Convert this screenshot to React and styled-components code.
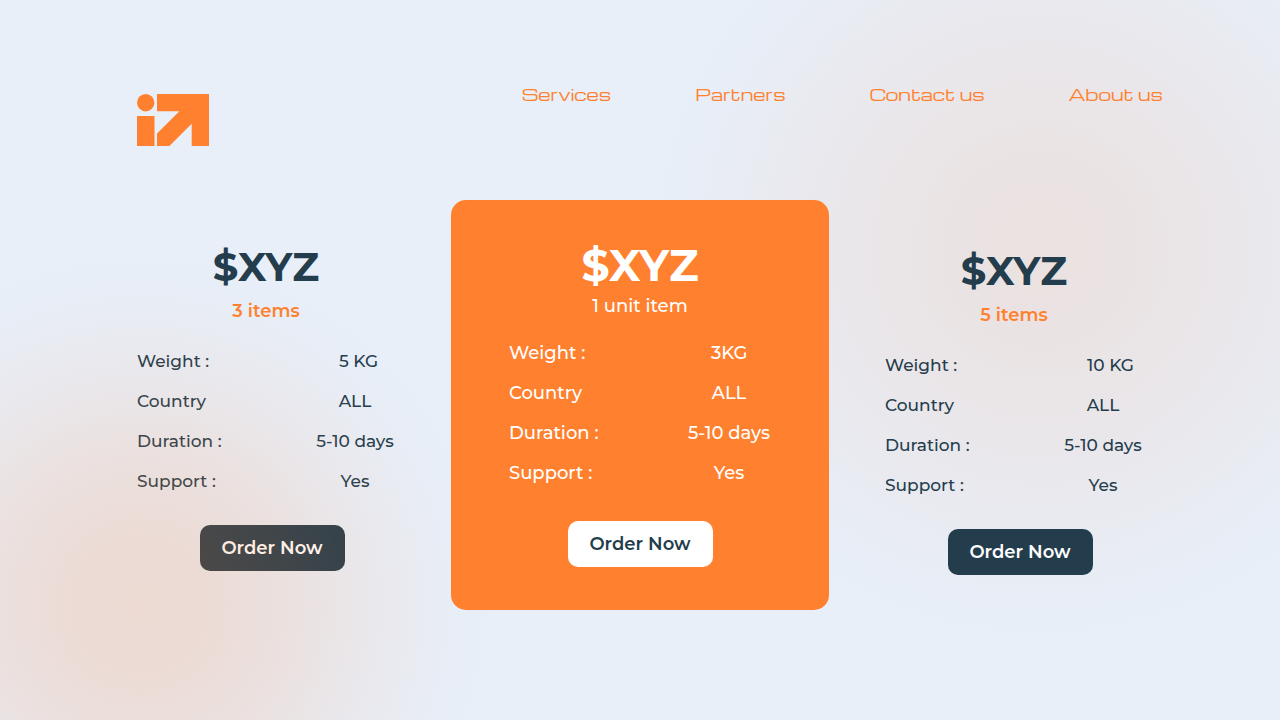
import React from "react";
import styled, { createGlobalStyle, ThemeProvider } from "styled-components";

const theme = {
  orange: "#ff812f",
  navy: "#243d4d",
  sky: "#e8eff9",
  white: "#ffffff",
};

const GlobalStyle = createGlobalStyle`
  *, *::before, *::after { box-sizing: border-box; }
  body {
    margin: 0;
    background: ${theme.sky};
    font-family: Montserrat, Inter, "Liberation Sans", sans-serif;
  }
`;

const Page = styled.div`
  position: relative;
  min-height: 100vh;
  overflow: hidden;
  color: ${(p) => p.theme.navy};
  background: radial-gradient(
      circle 400px at 1040px 250px,
      rgba(255, 128, 48, 0.12) 0%,
      rgba(255, 128, 48, 0.11) 20%,
      rgba(255, 128, 48, 0.08) 45%,
      rgba(255, 128, 48, 0.045) 68%,
      rgba(255, 128, 48, 0.012) 88%,
      rgba(255, 128, 48, 0) 100%
    )
    ${(p) => p.theme.sky};
`;

/* Warm light that falls over the lower left corner, tinting what is under it. */
const Glow = styled.div`
  position: absolute;
  inset: 0;
  pointer-events: none;
  background: radial-gradient(
    circle 360px at 140px 605px,
    rgba(255, 128, 48, 0.19) 0%,
    rgba(255, 128, 48, 0.175) 20%,
    rgba(255, 128, 48, 0.12) 45%,
    rgba(255, 128, 48, 0.055) 68%,
    rgba(255, 128, 48, 0.012) 88%,
    rgba(255, 128, 48, 0) 100%
  );
`;

const Header = styled.header`
  display: flex;
  justify-content: space-between;
  align-items: flex-start;
  padding: 80px 117px 0 137px;
`;

const LogoLink = styled.a`
  display: block;
  margin-top: 14px;
  color: ${(p) => p.theme.orange};

  svg { display: block; }
`;

const Nav = styled.nav`
  display: flex;
  gap: 84px;
`;

const NavLink = styled.a`
  color: ${(p) => p.theme.orange};
  font-family: Michroma, "DejaVu Sans", sans-serif;
  font-size: 16px;
  font-weight: 400;
  line-height: 28px;
  text-decoration: none;
  white-space: nowrap;
`;

const Plans = styled.main`
  display: grid;
  grid-template-columns: 258fr 378fr 258fr;
  column-gap: 56px;
  align-items: start;
  padding: 54px 137px 40px;
`;

const Plan = styled.section`
  display: flex;
  flex-direction: column;
  align-items: center;
  padding-top: ${(p) => (p.$lowered ? 47 : 43)}px;
`;

const FeaturedPlan = styled(Plan)`
  padding: 42px 58px 43px;
  border-radius: 15px;
  color: ${(p) => p.theme.white};
  background: ${(p) => p.theme.orange};
`;

const Price = styled.h2`
  margin: 0;
  font-size: ${(p) => (p.$featured ? 44 : 40)}px;
  font-weight: 700;
  line-height: ${(p) => (p.$featured ? 46 : 48)}px;
`;

const Quantity = styled.p`
  margin: ${(p) => (p.$featured ? "6px 0 15px" : "8px 0 18px")};
  color: ${(p) => (p.$featured ? p.theme.white : p.theme.orange)};
  font-size: 18px;
  font-weight: ${(p) => (p.$featured ? 500 : 600)};
  line-height: 24px;
`;

const Details = styled.table`
  width: 100%;
  border-collapse: collapse;
  font-size: ${(p) => (p.$featured ? 18 : 17)}px;
  font-weight: 500;
  line-height: 24px;
`;

const Label = styled.th`
  padding: 8px 0;
  font-weight: 500;
  text-align: left;
`;

const Value = styled.td`
  width: ${(p) => (p.$featured ? 84 : 80)}px;
  padding: 8px 0 8px ${(p) => (p.$indented ? 24 : 0)}px;
  text-align: ${(p) => (p.$indented ? "left" : "center")};
  white-space: nowrap;
`;

const OrderButton = styled.button`
  width: 145px;
  height: 46px;
  margin: ${(p) => (p.$featured ? "28px 0 0" : "24px 0 0 12px")};
  padding: 0;
  border: 0;
  border-radius: 10px;
  color: ${(p) => (p.$featured ? p.theme.navy : p.theme.white)};
  background: ${(p) => (p.$featured ? p.theme.white : p.theme.navy)};
  font-family: inherit;
  font-size: 18px;
  font-weight: 600;
  cursor: pointer;
`;

const links = ["Services", "Partners", "Contact us", "About us"];

const plans = [
  { quantity: "3 items", weight: "5 KG" },
  { quantity: "1 unit item", weight: "3KG", featured: true },
  { quantity: "5 items", weight: "10 KG", lowered: true },
];

function Logo() {
  return (
    <svg width="72" height="52" viewBox="0 0 72 52" fill="currentColor" aria-hidden="true">
      <circle cx="8.7" cy="8.7" r="8.7" />
      <path d="M0 22H17.5V52H0Z" />
      <path d="M20 0H72V52H54.7V29.7L32.4 52H20V39.6L42.4 17.3H20Z" />
    </svg>
  );
}

function PlanCard({ plan }) {
  const Card = plan.featured ? FeaturedPlan : Plan;
  const rows = [
    { label: "Weight :", value: plan.weight, indented: true },
    { label: "Country", value: "ALL" },
    { label: "Duration :", value: "5-10 days" },
    { label: "Support :", value: "Yes" },
  ];
  return (
    <Card $lowered={plan.lowered}>
      <Price $featured={plan.featured}>$XYZ</Price>
      <Quantity $featured={plan.featured}>{plan.quantity}</Quantity>
      <Details $featured={plan.featured}>
        <tbody>
          {rows.map(({ label, value, indented }) => (
            <tr key={label}>
              <Label scope="row">{label}</Label>
              <Value $featured={plan.featured} $indented={indented}>
                {value}
              </Value>
            </tr>
          ))}
        </tbody>
      </Details>
      <OrderButton type="button" $featured={plan.featured}>
        Order Now
      </OrderButton>
    </Card>
  );
}

export default function App() {
  return (
    <ThemeProvider theme={theme}>
      <GlobalStyle />
      <Page>
        <Header>
          <LogoLink href="#" aria-label="Home">
            <Logo />
          </LogoLink>
          <Nav>
            {links.map((text) => (
              <NavLink key={text} href="#">
                {text}
              </NavLink>
            ))}
          </Nav>
        </Header>
        <Plans>
          {plans.map((plan) => (
            <PlanCard key={plan.quantity} plan={plan} />
          ))}
        </Plans>
        <Glow />
      </Page>
    </ThemeProvider>
  );
}
